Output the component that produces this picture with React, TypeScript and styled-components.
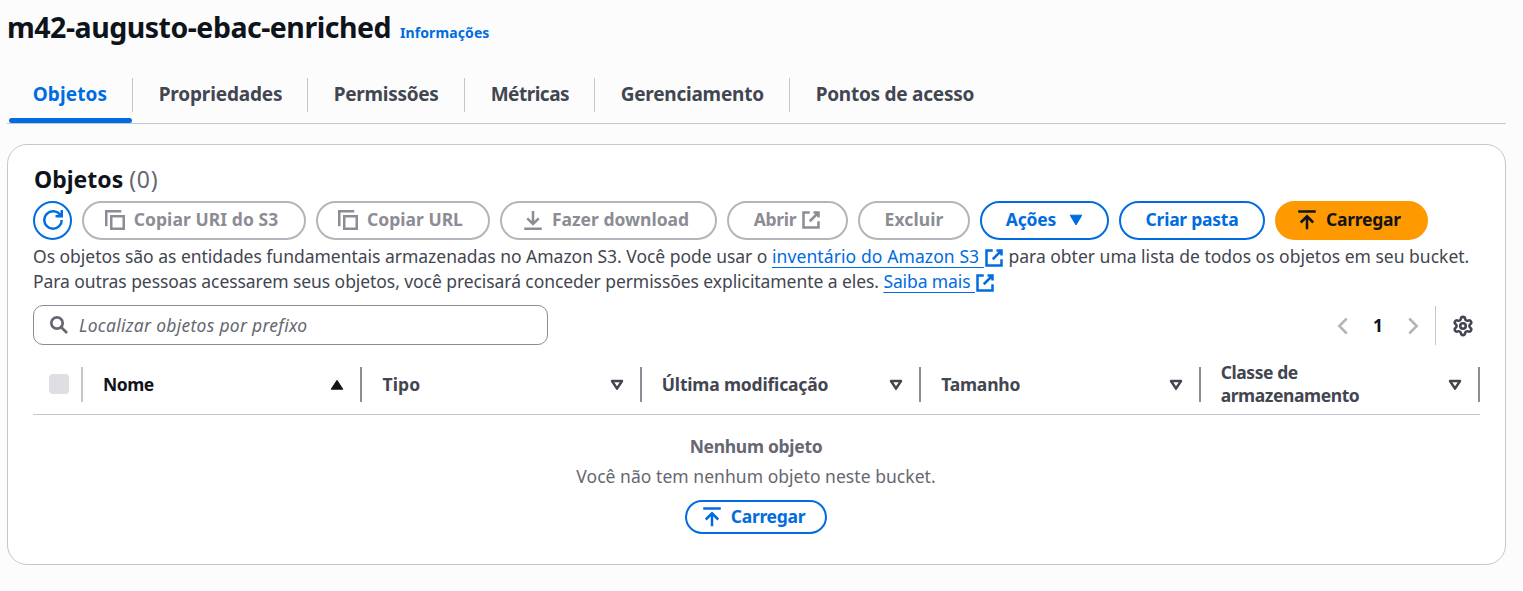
import React from "react";
import styled, { createGlobalStyle } from "styled-components";
import { Settings } from "lucide-react";

const color = {
  page: "#fcfcfd",
  surface: "#ffffff",
  heading: "#0f141a",
  body: "#424650",
  muted: "#656871",
  blue: "#006ce0",
  orange: "#ff9900",
  line: "#c6c6cd",
  disabled: "#8c8c94",
  disabledBorder: "#b4b4bb",
  checkbox: "#dedee3",
};

const GlobalStyle = createGlobalStyle`
  *, *::before, *::after { box-sizing: border-box; }
  body {
    margin: 0;
    background: ${color.page};
    color: ${color.body};
    font-family: "Noto Sans", "Open Sans", sans-serif;
    font-size: 17.5px;
    line-height: 25px;
  }
`;

const Page = styled.main`
  height: 591px;
  padding: 0 17px 0 7px;
  overflow: hidden;
`;

const Text = styled.span<{ $track?: number }>`
  letter-spacing: ${({ $track = 0 }) => $track}px;
  white-space: nowrap;
`;

const TitleRow = styled.header`
  display: flex;
  align-items: baseline;
  gap: 9px;
  height: 54px;
`;

const Title = styled.h1`
  margin: 0;
  color: ${color.heading};
  font-size: 28.5px;
  font-weight: 700;
  line-height: 54px;
  letter-spacing: -0.49px;
  white-space: nowrap;
`;

const InfoLink = styled.a`
  color: ${color.blue};
  font-size: 14px;
  font-weight: 700;
  letter-spacing: 0.1px;
`;

const TabList = styled.nav`
  display: flex;
  height: 58px;
  margin-top: 12px;
  border-bottom: 1px solid ${color.line};
`;

const Tab = styled.a<{ $width: number; $active?: boolean }>`
  position: relative;
  display: flex;
  align-items: center;
  justify-content: space-between;
  width: ${({ $width }) => $width}px;
  padding-left: 25.7px;
  color: ${({ $active }) => ($active ? color.blue : color.body)};
  font-size: 19px;
  font-weight: 700;

  &::after {
    content: "";
    display: ${({ $active }) => ($active ? "block" : "none")};
    position: absolute;
    left: 2px;
    right: 1px;
    bottom: 0;
    height: 5px;
    border-radius: 3px;
    background: ${color.blue};
  }
`;

const TabDivider = styled.span`
  width: 1px;
  height: 34px;
  background: ${color.line};
`;

const Card = styled.section`
  height: 421px;
  margin-top: 20px;
  padding: 19px 25px 0;
  border: 1px solid ${color.line};
  border-radius: 20px;
  background: ${color.surface};
`;

const CardTitle = styled.h2`
  display: flex;
  gap: 6px;
  margin: 0;
  padding-left: 1px;
  color: ${color.heading};
  font-size: 23px;
  font-weight: 700;
  line-height: 31px;
`;

const Counter = styled.span`
  color: ${color.muted};
  font-weight: 400;
  letter-spacing: 0.7px;
`;

const Toolbar = styled.div`
  display: flex;
  gap: 10px;
  margin-top: 6px;
`;

type Variant = "normal" | "disabled" | "primary";

const inks: Record<Variant, string> = { normal: color.blue, disabled: color.disabled, primary: color.heading };
const edges: Record<Variant, string> = { normal: color.blue, disabled: color.disabledBorder, primary: color.orange };

const Button = styled.button<{
  $width: number;
  $variant?: Variant;
  $gap?: number;
  $compact?: boolean;
  $leadingIcon?: boolean;
}>`
  display: flex;
  flex: none;
  align-items: center;
  justify-content: center;
  gap: ${({ $gap = 9 }) => $gap}px;
  width: ${({ $width }) => $width}px;
  height: ${({ $compact }) => ($compact ? 34 : 39)}px;
  padding: 0 ${({ $leadingIcon }) => ($leadingIcon ? 5 : 0)}px 1px 0;
  border: 2px solid ${({ $variant = "normal" }) => edges[$variant]};
  border-radius: 20px;
  background: ${({ $variant }) => ($variant === "primary" ? color.orange : color.surface)};
  color: ${({ $variant = "normal" }) => inks[$variant]};
  font-family: inherit;
  font-size: 17.5px;
  font-weight: 700;
  line-height: 25px;
`;

const ButtonLabel = styled(Text)`
  padding-bottom: 1px;
`;

const Description = styled.p`
  margin: 4px 0 0;
  white-space: nowrap;
`;

const Link = styled.a`
  color: ${color.blue};
`;

const LinkText = styled(Text)`
  text-decoration: underline 1px;
  text-underline-offset: 4px;
  text-decoration-skip-ink: none;
  white-space: pre;
`;

const Glyph = styled.svg<{ $stroke?: number }>`
  flex: none;
  width: 20px;
  height: 20px;
  fill: none;
  stroke: currentColor;
  stroke-width: ${({ $stroke = 2 }) => $stroke};
  vertical-align: -5px;
`;

const FilterRow = styled.div`
  display: flex;
  align-items: center;
  justify-content: space-between;
  margin-top: 11px;
`;

const SearchBox = styled.div`
  display: flex;
  align-items: center;
  gap: 10px;
  width: 515px;
  height: 40px;
  padding: 0 15px;
  border: 1px solid ${color.disabled};
  border-radius: 10px;
  color: ${color.muted};
  font-style: italic;
`;

const Pagination = styled.div`
  display: flex;
  align-items: center;
  height: 40px;
  padding: 1px 6px 0 0;
  color: ${color.disabledBorder};
`;

const PageNumber = styled.span`
  width: 50px;
  padding-bottom: 1px;
  color: ${color.heading};
  font-weight: 700;
  text-align: center;
`;

const ToolsDivider = styled.span`
  width: 1px;
  height: 39px;
  margin: 0 16px 0 12px;
  background: ${color.line};
`;

const Gear = styled(Settings)`
  color: ${color.body};
`;

const TableHead = styled.div`
  display: flex;
  align-items: stretch;
  height: 60px;
  margin-top: 10px;
  border-bottom: 1px solid ${color.line};
`;

const HeadCell = styled.div<{ $select?: boolean; $sorted?: boolean }>`
  display: flex;
  flex: ${({ $select }) => ($select ? "0 0 50px" : "1 1 0")};
  align-items: center;
  padding-left: ${({ $select }) => ($select ? 16 : 20)}px;
  color: ${({ $sorted }) => ($sorted ? color.heading : color.body)};
  font-weight: 700;
  line-height: 23px;
`;

const HeadLabel = styled.span<{ $wrapped?: boolean }>`
  display: flex;
  flex: 1;
  flex-direction: column;
  padding-bottom: ${({ $wrapped }) => ($wrapped ? 2 : 0)}px;
`;

const ColumnDivider = styled.span<{ $light?: boolean }>`
  width: 2px;
  height: 35px;
  margin-left: ${({ $light }) => ($light ? "auto" : "16px")};
  background: ${({ $light }) => ($light ? color.line : color.disabled)};
`;

const Checkbox = styled.span`
  width: 20px;
  height: 20px;
  margin-bottom: 1px;
  border-radius: 4px;
  background: ${color.checkbox};
`;

const EmptyState = styled.div`
  display: flex;
  flex-direction: column;
  align-items: center;
  gap: 4.5px;
  padding: 19px 1px 0 0;
  color: ${color.muted};
`;

const EmptyTitle = styled(Text)`
  font-weight: 700;
`;

const EmptyAction = styled.div`
  margin-top: 7px;
`;

const CopyIcon = () => (
  <Glyph viewBox="0 0 16 16">
    <path d="M13 1H1v12M5 5h10v10H5z" />
  </Glyph>
);

const RefreshIcon = () => (
  <Glyph viewBox="0 0 16 16">
    <path d="M10 5h5V0M15 8a6.96 6.96 0 0 1-7 7 6.96 6.96 0 0 1-7-7 6.96 6.96 0 0 1 7-7 6.87 6.87 0 0 1 6.3 4" />
  </Glyph>
);

const DownloadIcon = () => (
  <Glyph viewBox="0 0 16 16">
    <path d="M1 15h14M8 .8v10.4M3.4 6.7 8 11.2l4.6-4.5" />
  </Glyph>
);

const UploadIcon = () => (
  <Glyph viewBox="0 0 16 16">
    <path d="M1 1.2h14M8 15.4V5M3 10l5-5 5 5" />
  </Glyph>
);

const ExternalIcon = () => (
  <Glyph viewBox="0 0 16 16">
    <path d="M10 2h4v4M7 9l7-7M14 9v5H2V2h5" />
  </Glyph>
);

const SearchIcon = () => (
  <Glyph viewBox="0 0 20 20" $stroke={2.7}>
    <circle cx="8" cy="8" r="5.7" />
    <path d="m12 12 6 6" />
  </Glyph>
);

const Chevron = ({ right = false }: { right?: boolean }) => (
  <Glyph viewBox="0 0 16 16">
    <path d={right ? "m5 2 6 6-6 6" : "m11 2-6 6 6 6"} />
  </Glyph>
);

const Arrow = styled.svg`
  flex: none;
  width: 14px;
  height: 12px;
  stroke: currentColor;
  stroke-linejoin: round;
`;

const DropdownArrow = () => (
  <Arrow viewBox="0 0 14 12">
    <path d="M1.2 1.2h11.6L7 11z" fill="currentColor" />
  </Arrow>
);

const SortArrow = ({ sorted = false }: { sorted?: boolean }) => (
  <Arrow viewBox="0 0 14 12">
    {sorted ? (
      <path d="M7 1.3 12.8 10.2H1.2z" fill="currentColor" />
    ) : (
      <path d="M2 2h10L7 9.6z" fill="none" strokeWidth="2.5" />
    )}
  </Arrow>
);

const tabs = [
  { label: "Objetos", width: 126, track: 0.1 },
  { label: "Propriedades", width: 175, track: -0.16 },
  { label: "Permissões", width: 157, track: -0.28 },
  { label: "Métricas", width: 130, track: -0.5 },
  { label: "Gerenciamento", width: 195, track: -0.23 },
  { label: "Pontos de acesso", width: 210, track: -0.25 },
];

const columns = [
  { lines: ["Nome"], track: -0.5 },
  { lines: ["Tipo"], track: 0.15 },
  { lines: ["Última modificação"], track: -0.18 },
  { lines: ["Tamanho"], track: -0.2 },
  { lines: ["Classe de", "armazenamento"], track: -0.42 },
];

export default function App() {
  return (
    <Page>
      <GlobalStyle />
      <TitleRow>
        <Title>m42-augusto-ebac-enriched</Title>
        <InfoLink>Informações</InfoLink>
      </TitleRow>

      <TabList>
        {tabs.map((tab, i) => (
          <Tab key={tab.label} $width={tab.width} $active={i === 0}>
            <Text $track={tab.track}>{tab.label}</Text>
            {i < tabs.length - 1 && <TabDivider />}
          </Tab>
        ))}
      </TabList>

      <Card>
        <CardTitle>
          Objetos <Counter>(0)</Counter>
        </CardTitle>

        <Toolbar>
          <Button $width={39} aria-label="Atualizar">
            <RefreshIcon />
          </Button>
          <Button $width={224} $variant="disabled" $leadingIcon>
            <CopyIcon />
            <ButtonLabel $track={0.07}>Copiar URI do S3</ButtonLabel>
          </Button>
          <Button $width={174} $variant="disabled" $leadingIcon>
            <CopyIcon />
            <ButtonLabel>Copiar URL</ButtonLabel>
          </Button>
          <Button $width={217} $variant="disabled" $leadingIcon>
            <DownloadIcon />
            <ButtonLabel>Fazer download</ButtonLabel>
          </Button>
          <Button $width={121} $variant="disabled" $gap={5}>
            <ButtonLabel $track={-0.3}>Abrir</ButtonLabel>
            <ExternalIcon />
          </Button>
          <Button $width={112} $variant="disabled">
            <ButtonLabel $track={0.1}>Excluir</ButtonLabel>
          </Button>
          <Button $width={129} $gap={13}>
            <ButtonLabel $track={-0.2}>Ações</ButtonLabel>
            <DropdownArrow />
          </Button>
          <Button $width={146}>
            <ButtonLabel $track={-0.25}>Criar pasta</ButtonLabel>
          </Button>
          <Button $width={153} $variant="primary" $leadingIcon>
            <UploadIcon />
            <ButtonLabel $track={-0.25}>Carregar</ButtonLabel>
          </Button>
        </Toolbar>

        <Description>
          <Text $track={-0.02}>
            Os objetos são as entidades fundamentais armazenadas no Amazon S3. Você pode usar o{" "}
          </Text>
          <Link>
            <LinkText $track={0.1}>{"inventário do Amazon S3 "}</LinkText>
            <ExternalIcon />
          </Link>
          <Text> para obter uma lista de todos os objetos em seu bucket.</Text>
          <br />
          <Text $track={-0.07}>
            Para outras pessoas acessarem seus objetos, você precisará conceder permissões explicitamente a eles.{" "}
          </Text>
          <Link>
            <LinkText $track={-0.1}>{"Saiba mais "}</LinkText>
            <ExternalIcon />
          </Link>
        </Description>

        <FilterRow>
          <SearchBox>
            <SearchIcon />
            <Text $track={0.28}>Localizar objetos por prefixo</Text>
          </SearchBox>
          <Pagination>
            <Chevron />
            <PageNumber>1</PageNumber>
            <Chevron right />
            <ToolsDivider />
            <Gear size={22} strokeWidth={2.8} />
          </Pagination>
        </FilterRow>

        <TableHead>
          <HeadCell $select>
            <Checkbox />
            <ColumnDivider $light />
          </HeadCell>
          {columns.map((column, i) => (
            <HeadCell key={column.lines[0]} $sorted={i === 0}>
              <HeadLabel $wrapped={column.lines.length > 1}>
                {column.lines.map((line) => (
                  <Text key={line} $track={column.track}>
                    {line}
                  </Text>
                ))}
              </HeadLabel>
              <SortArrow sorted={i === 0} />
              <ColumnDivider />
            </HeadCell>
          ))}
        </TableHead>

        <EmptyState>
          <EmptyTitle $track={-0.3}>Nenhum objeto</EmptyTitle>
          <Text $track={0.04}>Você não tem nenhum objeto neste bucket.</Text>
          <EmptyAction>
            <Button $width={142} $compact $leadingIcon>
              <UploadIcon />
              <ButtonLabel $track={-0.3}>Carregar</ButtonLabel>
            </Button>
          </EmptyAction>
        </EmptyState>
      </Card>
    </Page>
  );
}
